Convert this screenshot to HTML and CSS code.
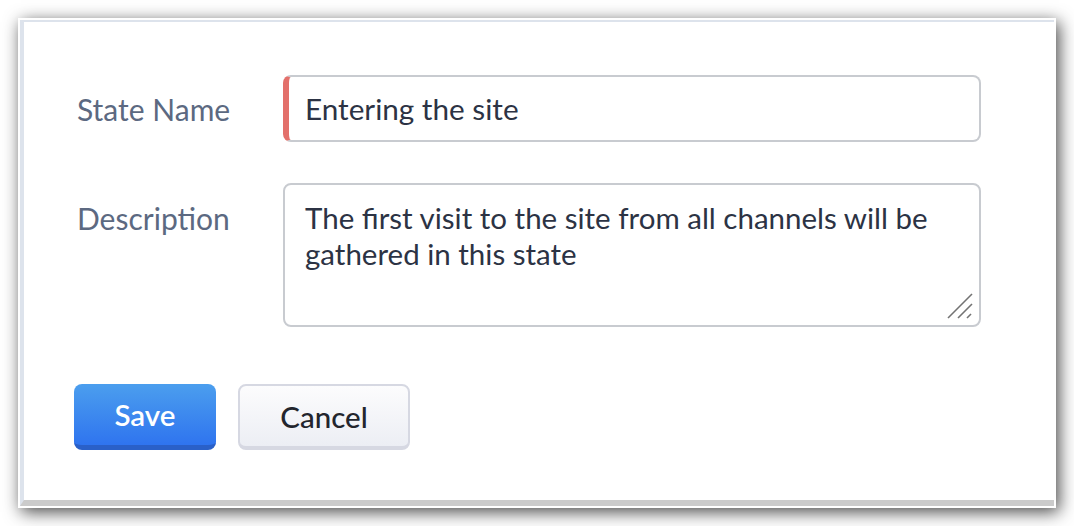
FILE: index.html
```html
<!DOCTYPE html>
<html lang="en">
<head>
<meta charset="utf-8">
<title>State form</title>
<link rel="stylesheet" href="styles.css">
</head>
<body>
<div class="frame">
  <div class="panel">
    <form class="form">
      <div class="grid">
        <label class="label label-input" for="state-name">State Name</label>
        <input id="state-name" class="input" type="text" value="Entering the site">
        <label class="label label-area" for="desc">Description</label>
        <textarea id="desc" class="area">The first visit to the site from all channels will be gathered in this state</textarea>
      </div>
      <div class="actions">
        <button type="button" class="btn btn-primary">Save</button>
        <button type="button" class="btn btn-secondary">Cancel</button>
      </div>
    </form>
  </div>
</div>
</body>
</html>
```
FILE: styles.css
```css
* { box-sizing: border-box; }
html, body { margin: 0; padding: 0; background: #ffffff; }
body { font-family: Lato, "Open Sans", sans-serif; }

.frame {
  margin: 18px;
  width: 1038px;
  height: 490px;
  padding: 2px;
  background: #ffffff;
  box-shadow: 3px 4px 16px rgba(0, 0, 0, 0.72);
}

.panel {
  height: 486px;
  background: #ffffff;
  border-top: 2px solid #dde3ec;
  border-left: 4px solid #dde3ec;
  border-bottom: 6px solid #cbcbcb;
  padding: 53px 0 0 53px;
}

.grid {
  display: grid;
  grid-template-columns: 206px 698px;
  row-gap: 41px;
}

.label {
  font-size: 30px;
  color: #5c6981;
  line-height: 36px;
}
.label-input { align-self: center; }
.label-area { padding-top: 17px; }

.input {
  height: 67px;
  width: 698px;
  border: 2px solid #c8cbd0;
  border-left: 6px solid #e3706b;
  border-radius: 8px;
  padding: 0 0 0 16px;
  font-family: Lato, "Open Sans", sans-serif;
  font-size: 29.7px;
  color: #2c3344;
  background: #ffffff;
  outline: none;
}

.area {
  display: block;
  height: 144px;
  width: 698px;
  border: 2px solid #c8cbd0;
  border-radius: 8px;
  padding: 15px 20px;
  font-family: Lato, "Open Sans", sans-serif;
  font-size: 29.5px;
  line-height: 36px;
  color: #2c3344;
  resize: none;
  outline: none;
  background: #ffffff url("data:image/svg+xml,%3Csvg xmlns='http://www.w3.org/2000/svg' width='28' height='28' viewBox='0 0 28 28'%3E%3Cg stroke='%23737373' stroke-width='1.6' stroke-linecap='butt'%3E%3Cline x1='2' y1='26' x2='26' y2='2'/%3E%3Cline x1='12' y1='26' x2='26' y2='12'/%3E%3Cline x1='21' y1='26' x2='25' y2='22'/%3E%3C/g%3E%3C/svg%3E") no-repeat right 5px bottom 5px;
}

.actions {
  display: flex;
  gap: 22px;
  margin-top: 57px;
  margin-left: -3px;
}

.btn {
  height: 66px;
  border-radius: 8px;
  font-family: Lato, "Open Sans", sans-serif;
  font-size: 29.5px;
  cursor: pointer;
}

.btn-primary {
  width: 142px;
  color: #ffffff;
  font-weight: 600;
  border: none;
  border-bottom: 5px solid #2a60c8;
  background: linear-gradient(#4b9eee, #2f74ef);
}

.btn-secondary {
  width: 172px;
  color: #22252d;
  font-weight: 500;
  border: 2px solid #d6d8e2;
  border-bottom-width: 4px;
  background: linear-gradient(#fcfcfd, #eceef4);
}
```
